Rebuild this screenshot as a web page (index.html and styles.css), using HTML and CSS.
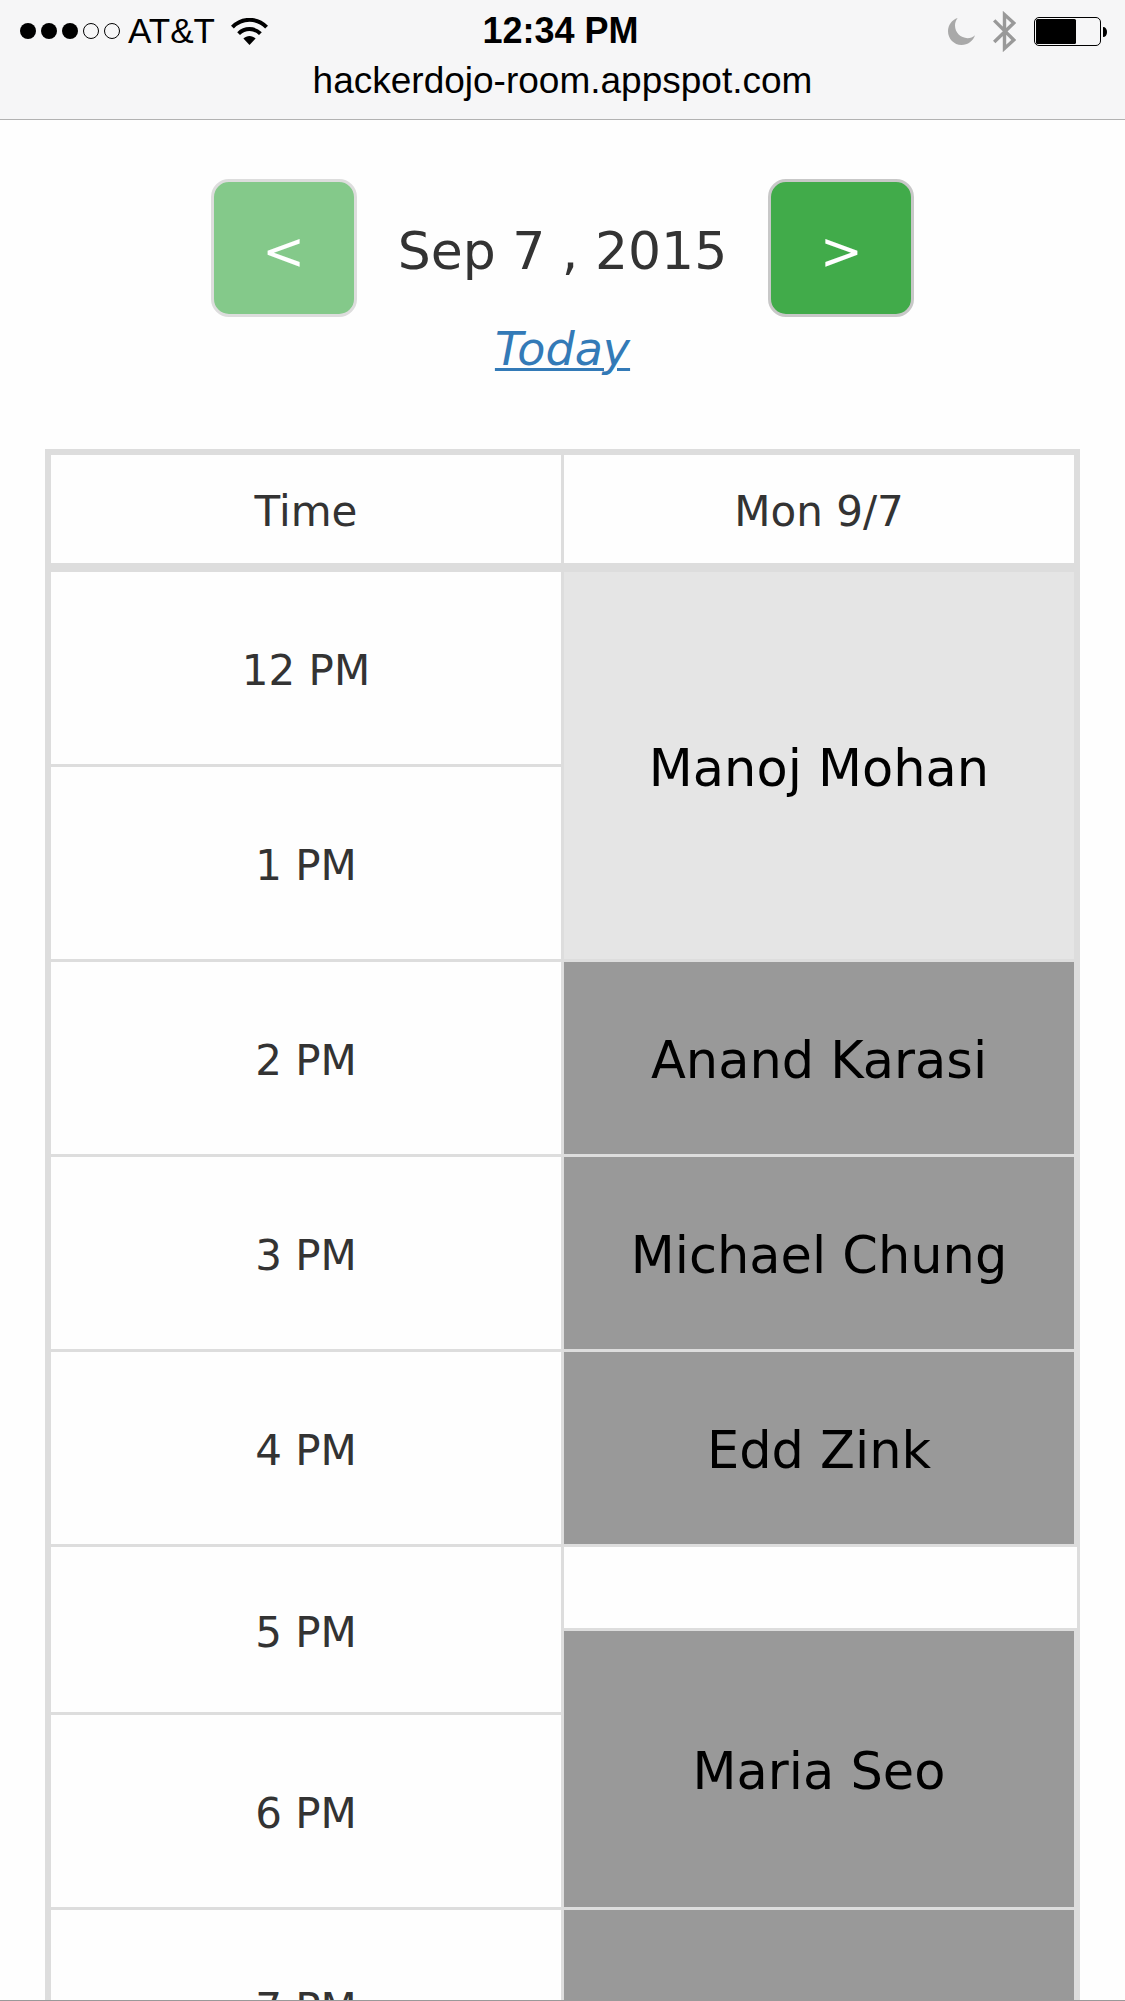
FILE: index.html
```html
<!DOCTYPE html>
<html lang="en">
<head>
<meta charset="utf-8">
<meta name="viewport" content="width=device-width, initial-scale=1">
<title>Hacker Dojo Room</title>
<link rel="stylesheet" href="styles.css">
</head>
<body>
<header class="browser-bar">
  <div class="status">
    <div class="status-left">
      <svg class="signal" width="100" height="16" viewBox="0 0 100 16" aria-hidden="true">
        <circle cx="8" cy="8" r="8"/>
        <circle cx="29" cy="8" r="8"/>
        <circle cx="50" cy="8" r="8"/>
        <circle class="signal-off" cx="71" cy="8" r="7.5"/>
        <circle class="signal-off" cx="92" cy="8" r="7.5"/>
      </svg>
      <span class="carrier">AT&amp;T</span>
      <svg class="wifi" width="37" height="27" viewBox="0 0 37 27" aria-hidden="true">
        <path class="wifi-arc" d="M1.4 9.2C11 -.6 26 -.6 35.6 9.2"/>
        <path class="wifi-arc" d="M7.6 15.6C13.8 9.6 23.2 9.6 29.4 15.6"/>
        <path d="M12.4 20.6C15.8 17 21.2 17 24.6 20.6L18.5 27Z"/>
      </svg>
    </div>
    <span class="clock">12:34 PM</span>
    <div class="status-right">
      <svg class="moon" width="27" height="27" viewBox="0 0 27 27" aria-hidden="true">
        <path d="M9.6 0C4 1.800 0 7 0 13.300C0 20.900 6 27 13.500 27C19.800 27 25.200 23 27 17.300C25 19.300 22.300 20.200 19.600 20.200C12.600 20.200 7 14.600 7 7.600C7 4.800 8 2 9.600 0Z"/>
      </svg>
      <svg class="bluetooth" width="23" height="41" viewBox="0 0 23 41" aria-hidden="true">
        <path d="M1.200 9.400L20.800 29L11.500 37.400V3.600L20.800 12L1.200 31"/>
      </svg>
      <svg class="battery" width="73" height="29" viewBox="0 0 73 29" aria-hidden="true">
        <rect class="battery-case" x=".5" y=".5" width="66" height="28" rx="4.500"/>
        <rect x="2" y="2" width="40" height="25" rx="1.500"/>
        <path d="M69 10C71.500 10 73 12 73 15C73 18 71.500 20 69 20Z"/>
      </svg>
    </div>
  </div>
  <div class="address">hackerdojo-room.appspot.com</div>
</header>
<main class="page">
  <nav class="day-nav" aria-label="Day">
    <button class="step" type="button" aria-label="Previous day" disabled>&lt;</button>
    <h1 class="day">Sep 7 , 2015</h1>
    <button class="step" type="button" aria-label="Next day">&gt;</button>
  </nav>
  <a class="today" href="#today">Today</a>
  <table class="schedule">
    <thead>
      <tr><th scope="col">Time</th><th scope="col">Mon 9/7</th></tr>
    </thead>
    <tbody>
      <tr class="hour"><th scope="row">12 PM</th><td class="past" rowspan="2">Manoj Mohan</td></tr>
      <tr class="hour"><th scope="row">1 PM</th></tr>
      <tr class="hour"><th scope="row">2 PM</th><td class="booked">Anand Karasi</td></tr>
      <tr class="hour"><th scope="row">3 PM</th><td class="booked">Michael Chung</td></tr>
      <tr class="hour"><th scope="row">4 PM</th><td class="booked">Edd Zink</td></tr>
      <tr class="half"><th scope="row" rowspan="2">5 PM</th><td class="free"></td></tr>
      <tr class="half"><td class="booked" rowspan="2">Maria Seo</td></tr>
      <tr class="hour"><th scope="row">6 PM</th></tr>
      <tr class="hour"><th scope="row">7 PM</th><td class="booked"></td></tr>
    </tbody>
  </table>
</main>
</body>
</html>
```
FILE: styles.css
```css
* {
  box-sizing: border-box;
}

body {
  margin: 0;
  height: 100vh;
  display: flex;
  flex-direction: column;
  background: #fefefe;
  color: #333;
  font-family: Verdana, "DejaVu Sans", sans-serif;
}

/* Browser chrome */
.browser-bar {
  flex: none;
  padding: 8px 18px 11px;
  border-bottom: 1px solid #b2b2b2;
  background: #f6f6f7;
  color: #000;
  font-family: "Liberation Sans", Arial, sans-serif;
}

.status {
  display: grid;
  grid-template-columns: 1fr auto 1fr;
  align-items: center;
  height: 46px;
}

.status-left,
.status-right {
  display: flex;
  align-items: center;
}

.status-left {
  gap: 8px;
  padding-left: 2px;
}

.status-right {
  justify-content: flex-end;
  gap: 18px;
}

.signal-off {
  fill: none;
  stroke: #000;
}

.carrier {
  font-size: 35px;
}

.wifi {
  margin-left: 8px;
}

.wifi-arc {
  fill: none;
  stroke: #000;
  stroke-width: 4;
}

.clock {
  padding-right: 4px;
  font-size: 36px;
  font-weight: bold;
}

.moon {
  fill: #a9a9a9;
}

.bluetooth {
  fill: none;
  stroke: #999;
  stroke-width: 3.4;
}

.battery-case {
  fill: none;
  stroke: #000;
}

.address {
  font-size: 37px;
  line-height: 54px;
  text-align: center;
}

/* Page */
.page {
  flex: 1;
  min-height: 0;
  overflow: hidden;
  padding: 59px 45px 0;
  border-bottom: 1px solid #999;
  text-align: center;
}

.day-nav {
  display: flex;
  justify-content: center;
  align-items: center;
}

.step {
  width: 146px;
  height: 138px;
  padding: 6px 0 0;
  border: 3px solid #c8c8c8;
  border-radius: 18px;
  background: #41ab4a;
  color: #fff;
  font: inherit;
  font-size: 51px;
}

.step:disabled {
  border-color: #ddd;
  background: #84c98a;
}

.day {
  margin: 0;
  padding: 6px 41px 0;
  font-size: 52px;
  font-weight: normal;
}

.today {
  display: block;
  width: fit-content;
  margin: 0 auto 68px;
  color: #337ab7;
  font-size: 46px;
  font-style: italic;
  line-height: 64px;
  text-decoration-thickness: 3px;
  text-underline-offset: 3px;
}

.schedule {
  width: 100%;
  table-layout: fixed;
  border-collapse: separate;
  border-spacing: 0;
  border-left: 3px solid #ddd;
  font-size: 42px;
}

.schedule th,
.schedule td {
  padding: 5px 0 0;
  border: 0 solid #ddd;
  border-bottom-width: 3px;
  font-weight: normal;
  text-align: center;
  vertical-align: middle;
}

.schedule th:first-child {
  border-left-width: 3px;
  border-right-width: 3px;
}

.schedule thead th {
  height: 123px;
  border-top-width: 6px;
  border-bottom-width: 9px;
}

.schedule thead th:last-child,
.schedule td {
  border-right-width: 6px;
}

.schedule .free {
  border-right-width: 3px;
}

.schedule td {
  color: #000;
  font-size: 51px;
}

.hour {
  height: 195px;
}

.half {
  height: 84px;
}

.past {
  background: #e5e5e5;
}

.booked {
  background: #999;
}
```
